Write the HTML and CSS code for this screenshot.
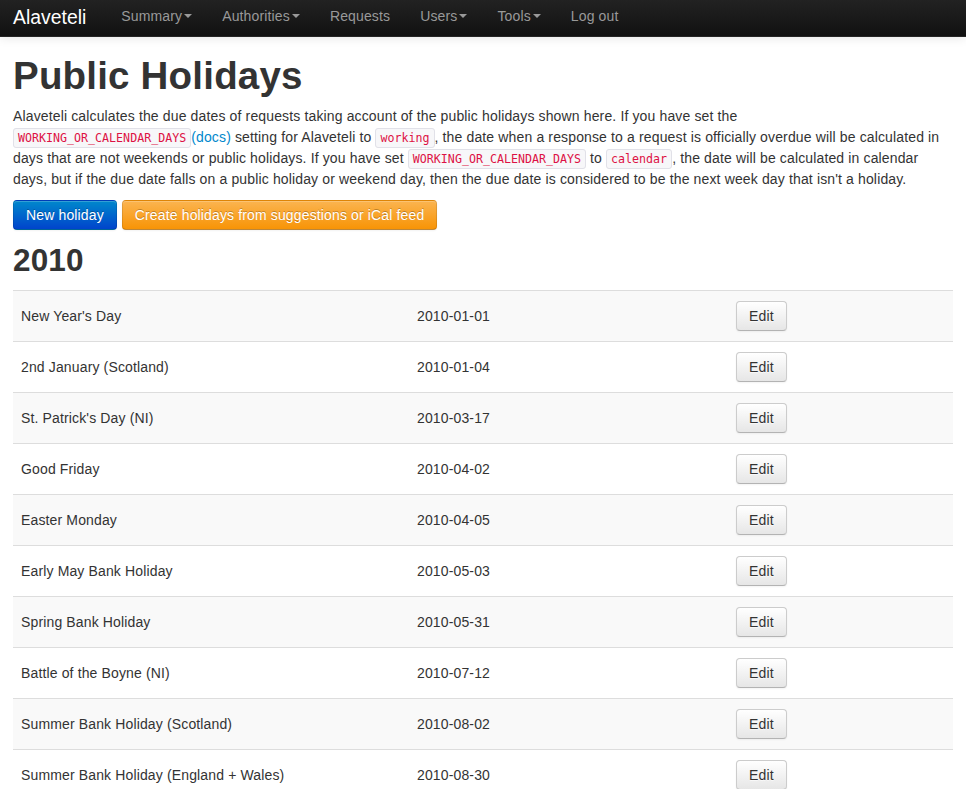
FILE: index.html
```html
<!DOCTYPE html>
<html lang="en">
<head>
<meta charset="utf-8">
<title>Public Holidays - Alaveteli</title>
<link rel="stylesheet" href="styles.css">
</head>
<body>
<div class="navbar">
  <div class="navbar-inner">
    <a class="brand" href="#">Alaveteli</a>
    <ul class="nav">
      <li><a href="#">Summary<span class="caret"></span></a></li>
      <li><a href="#">Authorities<span class="caret"></span></a></li>
      <li><a href="#">Requests</a></li>
      <li><a href="#">Users<span class="caret"></span></a></li>
      <li><a href="#">Tools<span class="caret"></span></a></li>
      <li><a href="#">Log out</a></li>
    </ul>
  </div>
</div>
<div class="container">
  <h1 class="title">Public Holidays</h1>
  <p class="intro">Alaveteli calculates the due dates of requests taking account of the public holidays shown here. If you have set the <code>WORKING_OR_CALENDAR_DAYS</code><a href="#" class="link">(docs)</a> setting for Alaveteli to <code>working</code>, the date when a response to a request is officially overdue will be calculated in days that are not weekends or public holidays. If you have set <code>WORKING_OR_CALENDAR_DAYS</code> to <code>calendar</code>, the date will be calculated in calendar days, but if the due date falls on a public holiday or weekend day, then the due date is considered to be the next week day that isn't a holiday.</p>
  <div class="actions">
    <a href="#" class="btn btn-primary">New holiday</a>
    <a href="#" class="btn btn-warning">Create holidays from suggestions or iCal feed</a>
  </div>
  <h2 class="year">2010</h2>
  <table class="holidays">
    <colgroup><col class="c1"><col class="c2"><col class="c3"></colgroup>
    <tbody>
      <tr><td>New Year's Day</td><td>2010-01-01</td><td><a href="#" class="btn">Edit</a></td></tr>
      <tr><td>2nd January (Scotland)</td><td>2010-01-04</td><td><a href="#" class="btn">Edit</a></td></tr>
      <tr><td>St. Patrick's Day (NI)</td><td>2010-03-17</td><td><a href="#" class="btn">Edit</a></td></tr>
      <tr><td>Good Friday</td><td>2010-04-02</td><td><a href="#" class="btn">Edit</a></td></tr>
      <tr><td>Easter Monday</td><td>2010-04-05</td><td><a href="#" class="btn">Edit</a></td></tr>
      <tr><td>Early May Bank Holiday</td><td>2010-05-03</td><td><a href="#" class="btn">Edit</a></td></tr>
      <tr><td>Spring Bank Holiday</td><td>2010-05-31</td><td><a href="#" class="btn">Edit</a></td></tr>
      <tr><td>Battle of the Boyne (NI)</td><td>2010-07-12</td><td><a href="#" class="btn">Edit</a></td></tr>
      <tr><td>Summer Bank Holiday (Scotland)</td><td>2010-08-02</td><td><a href="#" class="btn">Edit</a></td></tr>
      <tr><td>Summer Bank Holiday (England + Wales)</td><td>2010-08-30</td><td><a href="#" class="btn">Edit</a></td></tr>
      <tr><td>Christmas Day</td><td>2010-12-25</td><td><a href="#" class="btn">Edit</a></td></tr>
    </tbody>
  </table>
</div>
</body>
</html>
```

FILE: styles.css
```css
* { box-sizing: border-box; }
html, body { margin: 0; padding: 0; }
body {
  font-family: "Liberation Sans", Arial, sans-serif;
  font-size: 14px;
  line-height: 20px;
  letter-spacing: 0.14px;
  color: #333;
  background: #fff;
}
a { text-decoration: none; }

.navbar { position: relative; z-index: 2; }
.navbar-inner {
  height: 37px;
  display: flex;
  align-items: flex-start;
  background-image: linear-gradient(to bottom, #222222, #111111);
  border-bottom: 1px solid #252525;
  box-shadow: 0 1px 10px rgba(0,0,0,0.1);
  padding-left: 13px;
}
.brand {
  display: block;
  font-size: 19.4px;
  line-height: 20px;
  letter-spacing: 0;
  padding: 7px 20px 9px 0;
  color: #ffffff;
}
.nav {
  list-style: none;
  margin: 0;
  padding: 0;
  display: flex;
}
.nav a {
  display: block;
  padding: 6px 15px 10px;
  color: #999;
  font-size: 14px;
  line-height: 20px;
}
.caret {
  display: inline-block;
  width: 0; height: 0;
  vertical-align: top;
  margin-top: 8px;
  margin-left: 2px;
  border-top: 4px solid #999;
  border-left: 4px solid transparent;
  border-right: 4px solid transparent;
}

.container {
  width: 940px;
  margin: 0 auto;
}
.title {
  margin: 19px 0 10px;
  font-size: 38.5px;
  line-height: 40px;
  font-weight: bold;
  letter-spacing: 0.2px;
  color: #333;
}
.intro {
  margin: 0 0 10px;
  line-height: 21px;
}
code {
  font-family: "DejaVu Sans Mono", Menlo, monospace;
  font-size: 11.65px;
  line-height: 12px;
  letter-spacing: 0;
  padding: 2px 4px;
  color: #dd1144;
  background: #f7f7f9;
  border: 1px solid #e1e1e8;
  border-radius: 3px;
}
.link { color: #0088cc; }

.actions { display: flex; gap: 5px; }
.btn {
  display: inline-block;
  padding: 4px 12px;
  font-size: 14px;
  line-height: 20px;
  color: #333;
  text-shadow: 0 1px 1px rgba(255,255,255,0.75);
  background-color: #f5f5f5;
  background-image: linear-gradient(to bottom, #ffffff, #e6e6e6);
  border: 1px solid #cccccc;
  border-bottom-color: #b3b3b3;
  border-radius: 4px;
  box-shadow: inset 0 1px 0 rgba(255,255,255,0.2), 0 1px 2px rgba(0,0,0,0.05);
}
.btn-primary {
  color: #fff;
  text-shadow: 0 -1px 0 rgba(0,0,0,0.25);
  background-image: linear-gradient(to bottom, #0088cc, #0044cc);
  border-color: rgba(0,0,0,0.1) rgba(0,0,0,0.1) rgba(0,0,0,0.25);
}
.btn-warning {
  color: #fff;
  text-shadow: 0 -1px 0 rgba(0,0,0,0.25);
  background-image: linear-gradient(to bottom, #fbb450, #f89406);
  border-color: rgba(0,0,0,0.1) rgba(0,0,0,0.1) rgba(0,0,0,0.25);
}

.year {
  margin: 10px 0 10px;
  font-size: 31.5px;
  line-height: 40px;
  font-weight: bold;
}

.holidays {
  width: 940px;
  border-collapse: collapse;
  border-spacing: 0;
  table-layout: fixed;
}
.c1 { width: 396px; }
.c2 { width: 319px; }
.c3 { width: 225px; }
.holidays td {
  border-top: 1px solid #dddddd;
  padding: 10px 8px;
  vertical-align: middle;
  line-height: 20px;
}
.holidays tr:nth-child(odd) td { background: #f9f9f9; }
```
